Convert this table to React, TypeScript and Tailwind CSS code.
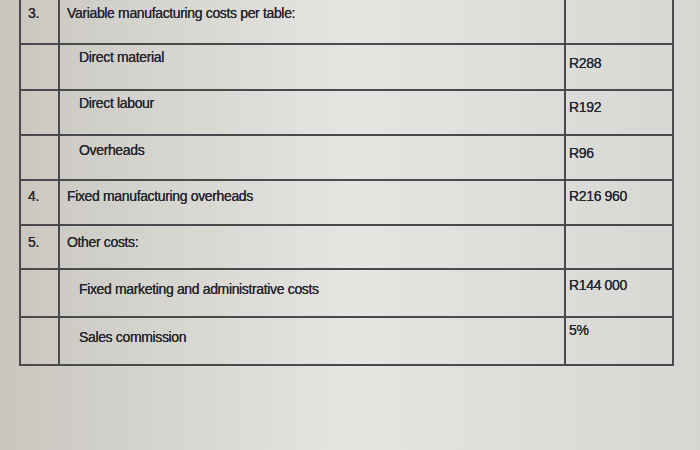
const rows = [
  { num: "3.", label: "Variable manufacturing costs per table:", value: "", sub: false, h: "h-[45px]", lp: "pt-[3px]", vp: "pt-[3px]" },
  { num: "", label: "Direct material", value: "R288", sub: true, h: "h-[46px]", lp: "pt-[2px]", vp: "pt-[8px]" },
  { num: "", label: "Direct labour", value: "R192", sub: true, h: "h-[45px]", lp: "pt-[2px]", vp: "pt-[6px]" },
  { num: "", label: "Overheads", value: "R96", sub: true, h: "h-[45px]", lp: "pt-[4px]", vp: "pt-[7px]" },
  { num: "4.", label: "Fixed manufacturing overheads", value: "R216 960", sub: false, h: "h-[45px]", lp: "pt-[5px]", vp: "pt-[5px]" },
  { num: "5.", label: "Other costs:", value: "", sub: false, h: "h-[44px]", lp: "pt-[6px]", vp: "pt-[6px]" },
  { num: "", label: "Fixed marketing and administrative costs", value: "R144 000", sub: true, h: "h-[48px]", lp: "pt-[9px]", vp: "pt-[5px]" },
  { num: "", label: "Sales commission", value: "5%", sub: true, h: "h-[48px]", lp: "pt-[9px]", vp: "pt-[2px]" },
];

export default function App() {
  return (
    <div
      className="w-[700px] h-[450px] overflow-hidden bg-linear-to-r from-[#c9c6bf] via-[#e5e5e2] to-[#d6d6d3] text-[#25252d] text-[14px] leading-5 tracking-[-0.35px] [text-shadow:0_0_0.6px_#25252d]"
      style={{ fontFamily: '"Liberation Sans", Arial, sans-serif' }}
    >
      <div className="ml-[19px] -mt-[2px] w-[655px] border-t-2 border-l-2 border-[#4a4a4e]">
        {rows.map((r, i) => (
          <div key={i} className={`grid grid-cols-[39px_506px_108px] ${r.h}`}>
            <div className={`border-r-2 border-b-2 border-[#4a4a4e] pl-[7px] ${r.lp}`}>{r.num}</div>
            <div className={`border-r-2 border-b-2 border-[#4a4a4e] ${r.sub ? "pl-[19px]" : "pl-[7px]"} ${r.lp}`}>
              {r.label}
            </div>
            <div className={`border-r-2 border-b-2 border-[#4a4a4e] pl-[3px] ${r.vp}`}>{r.value}</div>
          </div>
        ))}
      </div>
    </div>
  );
}
